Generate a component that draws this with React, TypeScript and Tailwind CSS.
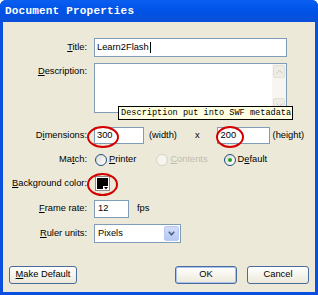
import type { ReactNode } from 'react';

const ui = { fontFamily: '"Liberation Sans", Arial, sans-serif' };
const mono = { fontFamily: '"Liberation Mono", "DejaVu Sans Mono", monospace' };

function Label({ children }: { children: ReactNode }) {
  return <div className="w-[86px] shrink-0 text-right pr-[2px]">{children}</div>;
}

function Radio({ checked, disabled, children }: { checked?: boolean; disabled?: boolean; children: ReactNode }) {
  return (
    <div className={`flex items-center gap-[1px] ${disabled ? 'text-[#c0bdb0]' : ''}`}>
      <span
        className={`w-[12px] h-[12px] rounded-full border flex items-center justify-center ${
          disabled ? 'border-[#d6d3c6] bg-[#f5f4ee]' : 'border-[#1c5180] bg-gradient-to-br from-[#dcdad4] to-white'
        }`}
      >
        {checked && <span className="w-[4px] h-[4px] rounded-full bg-[#21a121]" />}
      </span>
      <span className="ml-[1px]">{children}</span>
    </div>
  );
}

function Ring({ className }: { className: string }) {
  return <span className={`absolute rounded-[50%] border-2 border-[#d40000] pointer-events-none ${className}`} />;
}

export default function App() {
  return (
    <div className="w-[318px] h-[295px] bg-[#0a4fe0] rounded-t-[6px] overflow-hidden flex flex-col text-[9.3px] text-black" style={ui}>
      <div className="h-[22px] shrink-0 flex items-center pl-[5px] bg-gradient-to-b from-[#0a5ef0] via-[#0052e6] to-[#0a4fd8]">
        <span className="text-white font-bold text-[11px] tracking-[0.2px]" style={mono}>
          Document Properties
        </span>
      </div>
      <div className="flex-1 flex flex-col bg-[#ece9d8] ml-[3px] mr-[3px] mb-[3px] pb-[8px]">
        <div className="flex items-center mt-[16px] h-[19px]">
          <Label>
            <u>T</u>itle:
          </Label>
          <div className="ml-[5px] w-[193px] h-full border border-[#7f9db9] bg-white flex items-center px-[2px]">
            Learn2Flash<span className="w-px h-[11px] bg-black ml-px" />
          </div>
        </div>

        <div className="flex items-start mt-[6px] h-[50px]">
          <Label>
            <span className="block pt-[2px]">
              <u>D</u>escription:
            </span>
          </Label>
          <div className="relative ml-[5px] w-[193px] h-full border border-[#7f9db9] bg-white flex justify-end">
            <div className="w-[14px] h-full bg-[#f7f6f0] flex flex-col justify-between p-px">
              <div className="h-[13px] rounded-[2px] bg-[#eeede5] border border-[#e2e0d6] flex items-center justify-center">
                <svg width="7" height="4" viewBox="0 0 7 4">
                  <path d="M0.5 3.5 L3.5 0.5 L6.5 3.5" stroke="#c9c7ba" fill="none" />
                </svg>
              </div>
              <div className="h-[13px] rounded-[2px] bg-[#eeede5] border border-[#e2e0d6] flex items-center justify-center">
                <svg width="7" height="4" viewBox="0 0 7 4">
                  <path d="M0.5 0.5 L3.5 3.5 L6.5 0.5" stroke="#c9c7ba" fill="none" />
                </svg>
              </div>
            </div>
            <div
              className="absolute left-[23px] top-[42px] w-[175px] h-[14px] border border-black bg-[#ffffe1] flex items-center pl-[2px] text-[8.6px] z-10"
              style={mono}
            >
              Description put into SWF metadata
            </div>
          </div>
        </div>

        <div className="flex items-center mt-[14px] h-[17px]">
          <Label>
            D<u>i</u>mensions:
          </Label>
          <div className="relative ml-[5px] w-[50px] h-full border border-[#7f9db9] bg-white flex items-center px-[2px]">
            300
            <Ring className="-left-[8px] -top-[2px] w-[32px] h-[22px]" />
          </div>
          <span className="ml-[5px]">(width)</span>
          <span className="ml-[18px]">x</span>
          <div className="relative ml-[17px] w-[53px] h-full border border-[#7f9db9] bg-white flex items-center px-[3px]">
            200
            <Ring className="-left-[2px] -top-[2px] w-[28px] h-[22px]" />
          </div>
          <span className="ml-[3px]">(height)</span>
        </div>

        <div className="flex items-center mt-[9px] h-[14px]">
          <Label>
            Ma<u>t</u>ch:
          </Label>
          <div className="ml-[6px] flex items-center">
            <Radio>
              <u>P</u>rinter
            </Radio>
            <div className="ml-[20px]">
              <Radio disabled>
                <u>C</u>ontents
              </Radio>
            </div>
            <div className="ml-[16px]">
              <Radio checked>
                D<u>e</u>fault
              </Radio>
            </div>
          </div>
        </div>

        <div className="flex items-center mt-[9px] h-[15px]">
          <Label>
            <u>B</u>ackground color:
          </Label>
          <div className="relative ml-[6px] w-[15px] h-[15px] border border-[#8c8c8c] bg-white p-px">
            <div className="w-full h-full bg-black" />
            <span className="absolute right-0 bottom-0 w-[6px] h-[4px] bg-white flex items-center justify-center">
              <svg width="4" height="3" viewBox="0 0 4 3">
                <path d="M0 0 H4 L2 2.5 Z" fill="#000" />
              </svg>
            </span>
            <Ring className="-left-[9px] -top-[4px] w-[31px] h-[23px]" />
          </div>
        </div>

        <div className="flex items-center mt-[9px] h-[18px]">
          <Label>
            <u>F</u>rame rate:
          </Label>
          <div className="ml-[5px] w-[35px] h-full border border-[#7f9db9] bg-white flex items-center px-[3px]">12</div>
          <span className="ml-[8px]">fps</span>
        </div>

        <div className="flex items-center mt-[6px] h-[19px]">
          <Label>
            <u>R</u>uler units:
          </Label>
          <div className="ml-[5px] w-[87px] h-full border border-[#7f9db9] bg-white flex items-center p-px">
            <span className="flex-1 pl-[2px]">Pixels</span>
            <span className="w-[15px] h-full rounded-[2px] bg-gradient-to-b from-[#d2ddf9] to-[#b5c8f4] border border-[#b9cbf3] flex items-center justify-center">
              <svg width="7" height="5" viewBox="0 0 7 5">
                <path d="M0.8 0.8 L3.5 3.8 L6.2 0.8" stroke="#4d6185" strokeWidth="1.6" fill="none" />
              </svg>
            </span>
          </div>
        </div>

        <div className="flex items-center mt-auto h-[18px] px-[6px]">
          <button className="w-[68px] h-full rounded-[3px] border border-[#4a6c9c] bg-gradient-to-b from-white to-[#ece9d8] text-[9.3px] flex items-center justify-center">
            <u>M</u>ake Default
          </button>
          <button className="ml-auto w-[62px] h-full rounded-[3px] border border-[#4a6c9c] bg-gradient-to-b from-white to-[#ece9d8] text-[9.3px] shadow-[inset_0_0_0_1px_#a9c3ee]">
            OK
          </button>
          <button className="ml-[10px] w-[62px] h-full rounded-[3px] border border-[#4a6c9c] bg-gradient-to-b from-white to-[#ece9d8] text-[9.3px]">
            Cancel
          </button>
        </div>
      </div>
    </div>
  );
}
